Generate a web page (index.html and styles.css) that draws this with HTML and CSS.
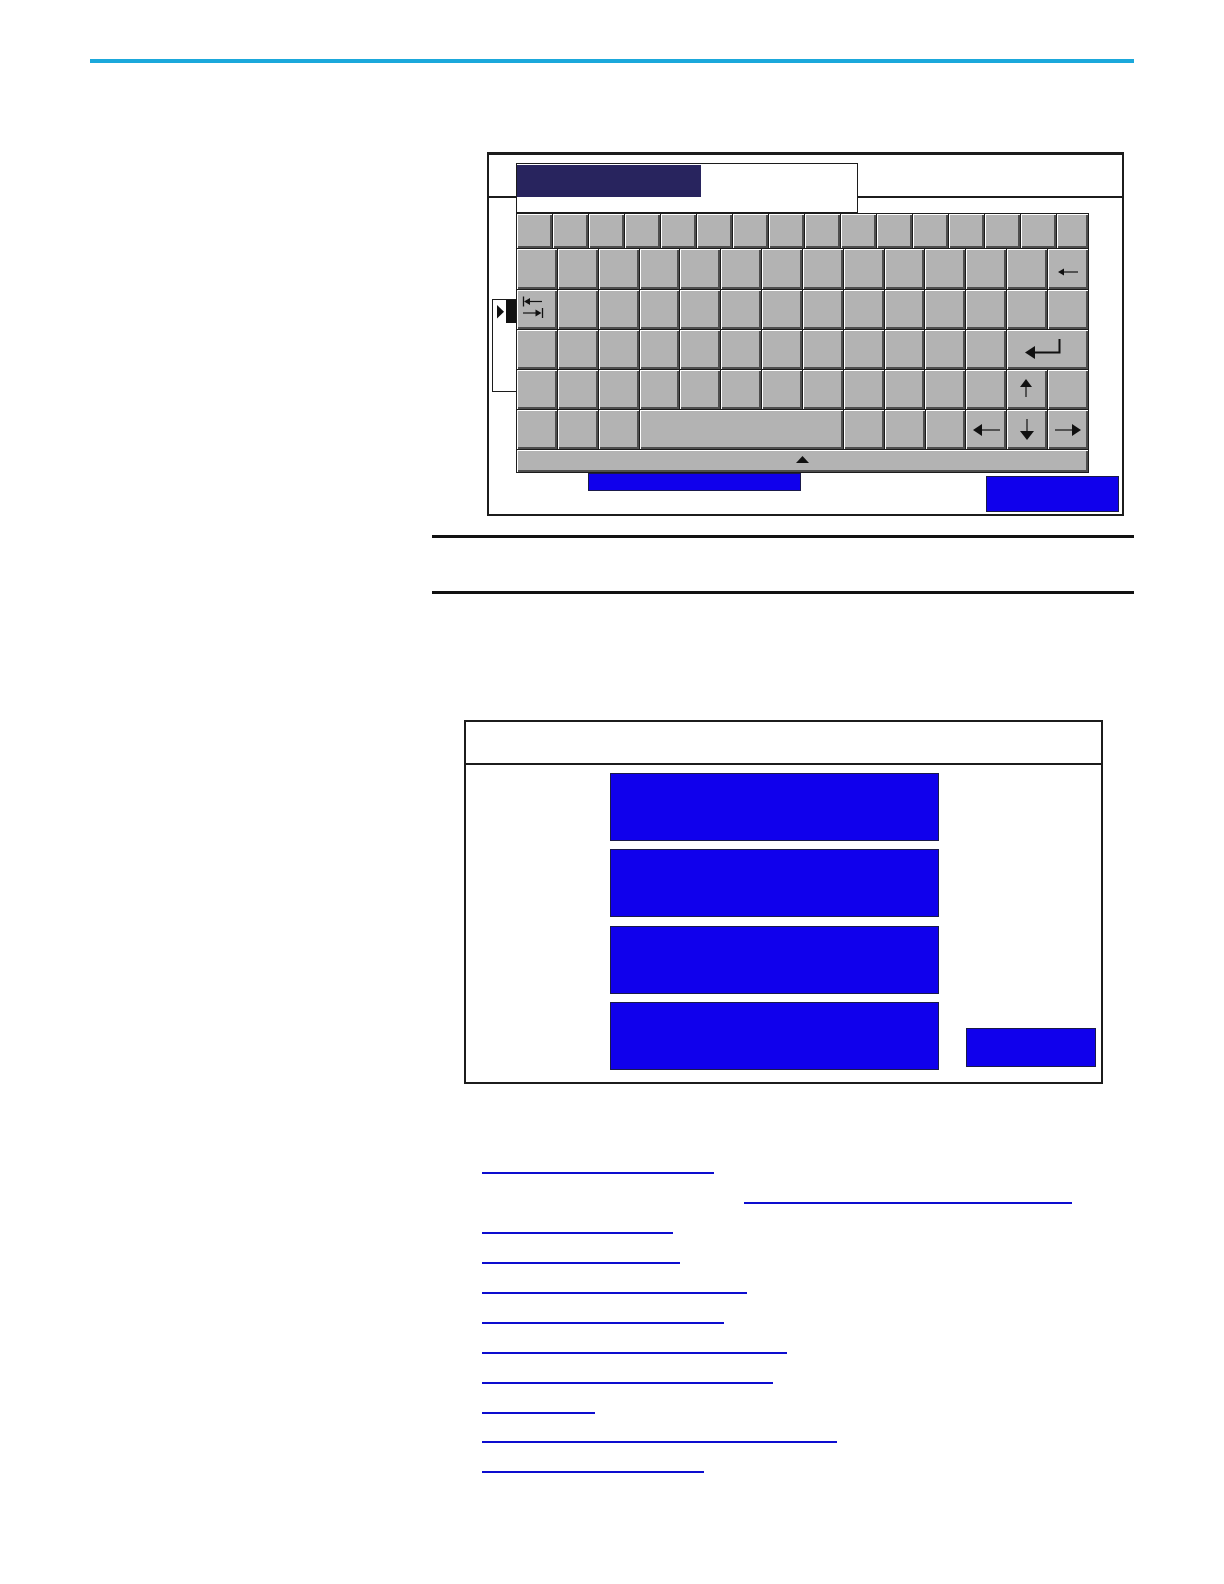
FILE: index.html
```html
<!DOCTYPE html>
<html lang="en">
<head>
<meta charset="utf-8">
<title>Keyboard and menu screens</title>
<link rel="stylesheet" href="styles.css">
</head>
<body>
<div class="page">
  <div class="rule-top"></div>

  <div class="fig fig-kb">
    <div class="kb-head"></div>
    <div class="kb-input"><div class="kb-input-sel"></div></div>
    <div class="kb-main">
      <div class="kb-side">
        <svg class="side-ico" width="23" height="91" viewBox="0 0 23 91">
          <path d="M4 5l7 6.8-7 6.8z" fill="#111"/>
          <rect x="13" y="-1" width="10" height="24" fill="#111"/>
        </svg>
      </div>
      <div class="kb">
        <div class="kb-row r1">
          <div class="key"></div><div class="key"></div><div class="key"></div><div class="key"></div>
          <div class="key"></div><div class="key"></div><div class="key"></div><div class="key"></div>
          <div class="key"></div><div class="key"></div><div class="key"></div><div class="key"></div>
          <div class="key"></div><div class="key"></div><div class="key"></div><div class="key last"></div>
        </div>
        <div class="kb-row r2">
          <div class="key"></div><div class="key"></div><div class="key"></div><div class="key"></div>
          <div class="key"></div><div class="key"></div><div class="key"></div><div class="key"></div>
          <div class="key"></div><div class="key"></div><div class="key"></div><div class="key"></div>
          <div class="key"></div>
          <div class="key ico-bs">
            <svg width="20" height="8" viewBox="0 0 20 8"><path d="M5 4h15" stroke="#111" stroke-width="1.2"/><path d="M0 4l6-3.5v7z" fill="#111"/></svg>
          </div>
        </div>
        <div class="kb-row r3">
          <div class="key ico-tab">
            <svg width="22" height="23" viewBox="0 0 22 23">
              <path d="M1.5 0.5v10" stroke="#111" stroke-width="1.3"/>
              <path d="M6 5.5h14" stroke="#111" stroke-width="1.2"/>
              <path d="M2 5.5l6-3.5v7z" fill="#111"/>
              <path d="M1 17h14" stroke="#111" stroke-width="1.2"/>
              <path d="M19.5 17l-6-3.5v7z" fill="#111"/>
              <path d="M20.5 12v10" stroke="#111" stroke-width="1.3"/>
            </svg>
          </div>
          <div class="key"></div><div class="key"></div><div class="key"></div><div class="key"></div>
          <div class="key"></div><div class="key"></div><div class="key"></div><div class="key"></div>
          <div class="key"></div><div class="key"></div><div class="key"></div><div class="key"></div>
          <div class="key"></div>
        </div>
        <div class="kb-row r4">
          <div class="key"></div><div class="key"></div><div class="key"></div><div class="key"></div>
          <div class="key"></div><div class="key"></div><div class="key"></div><div class="key"></div>
          <div class="key"></div><div class="key"></div><div class="key"></div><div class="key"></div>
          <div class="key enter">
            <svg width="36" height="22" viewBox="0 0 36 22"><path d="M34.5 0v13.5H8" stroke="#111" stroke-width="2" fill="none"/><path d="M0 13.5l10-6.5v13z" fill="#111"/></svg>
          </div>
        </div>
        <div class="kb-row r5">
          <div class="key"></div><div class="key"></div><div class="key"></div><div class="key"></div>
          <div class="key"></div><div class="key"></div><div class="key"></div><div class="key"></div>
          <div class="key"></div><div class="key"></div><div class="key"></div><div class="key"></div>
          <div class="key ico-up">
            <svg width="14" height="18" viewBox="0 0 14 18"><path d="M7 6v12" stroke="#111" stroke-width="1.2"/><path d="M7 0l-6 8h12z" fill="#111"/></svg>
          </div>
          <div class="key"></div>
        </div>
        <div class="kb-row r6">
          <div class="key"></div><div class="key"></div><div class="key"></div>
          <div class="key space"></div>
          <div class="key"></div><div class="key"></div><div class="key"></div>
          <div class="key">
            <svg width="27" height="14" viewBox="0 0 27 14"><path d="M8 7h19" stroke="#111" stroke-width="1.2"/><path d="M0 7l9-6v12z" fill="#111"/></svg>
          </div>
          <div class="key">
            <svg width="14" height="21" viewBox="0 0 14 21"><path d="M7 0v14" stroke="#111" stroke-width="1.2"/><path d="M7 21l-7-9h14z" fill="#111"/></svg>
          </div>
          <div class="key">
            <svg width="26" height="14" viewBox="0 0 26 14"><path d="M0 7h18" stroke="#111" stroke-width="1.2"/><path d="M26 7l-9-6v12z" fill="#111"/></svg>
          </div>
        </div>
        <div class="kb-strip">
          <svg width="13" height="7" viewBox="0 0 13 7"><path d="M6.5 0L0 7h13z" fill="#111"/></svg>
        </div>
      </div>
    </div>
    <div class="kb-foot">
      <div class="kb-bar"></div>
      <div class="kb-btn"></div>
    </div>
  </div>

  <div class="note">
    <div class="rule"></div>
    <div class="note-body"></div>
    <div class="rule"></div>
  </div>

  <div class="fig fig-menu">
    <div class="menu-head"></div>
    <div class="menu-body">
      <div class="menu-list">
        <div class="menu-item"></div>
        <div class="menu-item"></div>
        <div class="menu-item"></div>
        <div class="menu-item"></div>
      </div>
      <div class="menu-btn"></div>
    </div>
  </div>

  <ul class="links">
    <li><a class="link l1" href="#"></a></li>
    <li><a class="link l2" href="#"></a></li>
    <li><a class="link l3" href="#"></a></li>
    <li><a class="link l4" href="#"></a></li>
    <li><a class="link l5" href="#"></a></li>
    <li><a class="link l6" href="#"></a></li>
    <li><a class="link l7" href="#"></a></li>
    <li><a class="link l8" href="#"></a></li>
    <li><a class="link l9" href="#"></a></li>
    <li><a class="link l10" href="#"></a></li>
    <li><a class="link l11" href="#"></a></li>
  </ul>
</div>
</body>
</html>
```

FILE: styles.css
```css
* { box-sizing: border-box; }

body {
  margin: 0;
  background: #fff;
  font-family: "Liberation Sans", Arial, sans-serif;
}

.page {
  width: 1224px;
  min-height: 1584px;
  padding-top: 59px;
}

.rule-top {
  margin-left: 90px;
  width: 1044px;
  height: 4px;
  background: #1ba8db;
}

/* ---------- keyboard figure ---------- */
.fig-kb {
  margin: 89px 0 0 487px;
  width: 637px;
  height: 364px;
  border: 2px solid #1c1c1c;
  border-top-width: 3px;
  display: flex;
  flex-direction: column;
}

.kb-head {
  flex: none;
  height: 43px;
  border-bottom: 2px solid #1c1c1c;
}

.kb-input {
  flex: none;
  margin: -35px 0 0 27px;
  width: 342px;
  height: 50px;
  border: 1px solid #1c1c1c;
  background: #fff;
}

.kb-input-sel {
  margin-top: 1px;
  width: 184px;
  height: 32px;
  background: #28245e;
}

.kb-main {
  flex: none;
  display: flex;
  align-items: flex-start;
}

.kb-side {
  margin: 86px 0 0 3px;
  width: 24px;
  height: 93px;
  border: 1px solid #1c1c1c;
  border-right: 0;
}

.side-ico { display: block; }

.kb {
  width: 573px;
  border-top: 1px solid #1c1c1c;
  border-left: 1px solid #1c1c1c;
}

.kb-row { display: flex; }
.r1 { height: 35px; }
.r2 { height: 41px; }
.r3, .r4, .r5, .r6 { height: 40px; }

.key, .kb-strip {
  background: #b3b3b3;
  border-right: 1px solid #1c1c1c;
  border-bottom: 1px solid #1c1c1c;
  box-shadow: inset 1px 1px 0 #fff, inset -2px -2px 0 #4e4e4e;
  display: flex;
  align-items: center;
  justify-content: center;
}

.key {
  flex: 0 0 calc(100% / 14);
  min-width: 0;
}

.r1 .key { flex: 0 0 36px; }
.r1 .key.last { flex: 1 1 0; }
.key.space { flex-basis: calc(500% / 14); }
.key.enter { flex-basis: calc(200% / 14); padding-right: 8px; }

.ico-bs { padding-top: 5px; }
.ico-tab { justify-content: flex-start; padding: 0 0 4px 5px; }
.ico-up { padding: 0 2px 4px 0; }

.key svg, .kb-strip svg { display: block; }

.kb-strip {
  height: 23px;
  padding: 0 0 3px 0;
}

.kb-foot {
  flex: 1;
  display: flex;
  align-items: flex-start;
}

.kb-bar {
  margin-left: 99px;
  width: 213px;
  height: 18px;
  background: #1000ec;
  border: 1px solid #1a1a4a;
}

.kb-btn {
  margin: 3px 3px 0 auto;
  width: 133px;
  height: 36px;
  background: #1000ec;
  border: 1px solid #1a1a4a;
}

/* ---------- note rules ---------- */
.note { margin-top: 19px; }

.rule {
  margin-left: 432px;
  width: 702px;
  height: 3px;
  background: #111;
}

.note-body { height: 53px; }

/* ---------- menu figure ---------- */
.fig-menu {
  margin: 126px 0 0 464px;
  width: 639px;
  height: 364px;
  border: 2px solid #1c1c1c;
  display: flex;
  flex-direction: column;
}

.menu-head {
  flex: none;
  height: 43px;
  border-bottom: 2px solid #1c1c1c;
}

.menu-body {
  flex: 1;
  display: flex;
  align-items: flex-end;
  padding-bottom: 12px;
}

.menu-list {
  margin-left: 144px;
  width: 329px;
  display: flex;
  flex-direction: column;
  gap: 8.5px;
}

.menu-item {
  height: 68px;
  background: #1000ec;
  border: 1px solid #1a1a4a;
}

.menu-btn {
  margin: 0 5px 3.5px 27px;
  width: 130px;
  height: 39px;
  background: #1000ec;
  border: 1px solid #1a1a4a;
}

/* ---------- link list ---------- */
.links {
  list-style: none;
  margin: 67px 0 0 482px;
  padding: 0;
}

.links li {
  height: 29.95px;
  padding-top: 21px;
}

.link {
  display: block;
  height: 2px;
  background: #0d0dcf;
}

.l1 { width: 232px; }
.l2 { width: 328px; margin-left: 262px; }
.l3 { width: 191px; }
.l4 { width: 198px; }
.l5 { width: 265px; }
.l6 { width: 242px; }
.l7 { width: 305px; }
.l8 { width: 291px; }
.l9 { width: 113px; }
.l10 { width: 355px; }
.l11 { width: 222px; }
```
